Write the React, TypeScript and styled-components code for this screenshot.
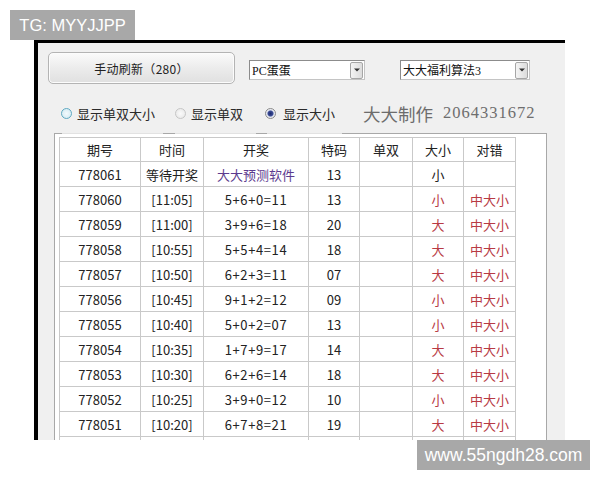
import React from "react";
import styled, { createGlobalStyle } from "styled-components";

const GlobalStyle = createGlobalStyle`
  html, body {
    margin: 0;
    padding: 0;
    background: #ffffff;
  }
  body {
    font-family: "Noto Sans CJK SC", "Noto Sans", sans-serif;
  }
`;

const Page = styled.div`
  position: relative;
  width: 600px;
  height: 480px;
  overflow: hidden;
  padding: 40px 0 0 34px;
  box-sizing: border-box;
`;

const Watermark = styled.div<{ $top: number; $left: number; $w: number; $size: number }>`
  position: absolute;
  top: ${(p) => p.$top}px;
  left: ${(p) => p.$left}px;
  width: ${(p) => p.$w}px;
  height: 30px;
  background: #a8a8a8;
  color: #ffffff;
  font-family: "Liberation Sans", Arial, sans-serif;
  font-size: ${(p) => p.$size}px;
  display: flex;
  align-items: center;
  justify-content: center;
  z-index: 5;
`;

const Window = styled.div`
  width: 531px;
  height: 400px;
  box-sizing: border-box;
  border-top: 3px solid #000;
  border-left: 4px solid #000;
  background: #f0f0f0;
  overflow: hidden;
  padding: 9px 0 0 10px;
`;

const TopRow = styled.div`
  display: flex;
  align-items: flex-start;
`;

const RefreshButton = styled.button`
  width: 187px;
  height: 32px;
  border: 1px solid #b4b4b4;
  border-radius: 5px;
  background: linear-gradient(#fbfbfb, #ececec 50%, #e0e0e0);
  box-shadow: inset 0 0 0 1px #fcfcfc;
  font-family: "Noto Sans CJK SC", sans-serif;
  font-size: 12px;
  color: #222;
  padding: 0;
  letter-spacing: 0.3px;
`;

const Combo = styled.div<{ $ml: number; $w: number }>`
  margin-left: ${(p) => p.$ml}px;
  margin-top: 8px;
  width: ${(p) => p.$w}px;
  height: 20px;
  box-sizing: border-box;
  border: 1px solid #8c8c8c;
  border-right-color: #c4c4c4;
  border-bottom-color: #c4c4c4;
  background: #fff;
  display: flex;
  align-items: center;
  justify-content: space-between;
  padding-left: 2px;
`;

const ComboText = styled.span`
  font-family: "Liberation Serif", "Noto Sans CJK SC", serif;
  font-size: 12px;
  color: #111;
`;

const ComboArrow = styled.span`
  width: 13px;
  height: 17px;
  margin-right: 1px;
  box-sizing: border-box;
  border: 1px solid #a6a6a6;
  border-radius: 2px;
  background: linear-gradient(90deg, #f4f4f4, #dcdcdc);
  display: flex;
  align-items: center;
  justify-content: center;
`;

const RadioRow = styled.div`
  display: flex;
  align-items: center;
  height: 18px;
  margin-top: 20px;
  padding-left: 13px;
`;

const RadioItem = styled.label<{ $ml: number }>`
  display: flex;
  align-items: center;
  margin-left: ${(p) => p.$ml}px;
  font-size: 13px;
  color: #2a2a2a;
`;

const RadioDot = styled.span<{ $kind: "hover" | "off" | "on" }>`
  width: 11px;
  height: 11px;
  box-sizing: border-box;
  border-radius: 50%;
  margin-right: ${(p) => (p.$kind === "on" ? 7 : 5)}px;
  border: 1px solid
    ${(p) => (p.$kind === "hover" ? "#5fa9c2" : p.$kind === "on" ? "#8a8a8a" : "#c6c6c6")};
  background: ${(p) =>
    p.$kind === "on"
      ? "radial-gradient(circle, #1d2b6e 0, #3b4c96 2.5px, #dfe3ef 3.5px, #f4f4f4 5px)"
      : p.$kind === "hover"
      ? "radial-gradient(circle, #f2fafd, #cfe8f1)"
      : "radial-gradient(circle, #fafafa, #e6e6e6)"};
`;

const Maker = styled.span`
  margin-left: 28px;
  font-size: 17.5px;
  color: #6c6c6c;
`;

const Qq = styled.span`
  margin-left: 10px;
  font-family: "Liberation Serif", "DejaVu Serif", serif;
  font-size: 16.5px;
  letter-spacing: 1px;
  color: #6e6e6e;
`;

const Frame = styled.div`
  margin-top: 11px;
  margin-left: 6px;
  width: 493px;
`;

const FrameTop = styled.div`
  display: flex;
  height: 1px;
`;

const FrameSeg = styled.span<{ $w: number; $dark?: boolean }>`
  width: ${(p) => p.$w}px;
  height: 1px;
  background: ${(p) => (p.$dark ? "#a8a8a8" : "#e2e2e2")};
`;

const FrameBody = styled.div`
  height: 320px;
  box-sizing: border-box;
  border-left: 1px solid #a8a8a8;
  border-right: 1px solid #a8a8a8;
  background: #fff;
  padding: 3px 0 0 4px;
`;

const Grid = styled.table`
  border-collapse: collapse;
  table-layout: fixed;
  width: 457px;
  font-size: 13px;
  color: #222;
`;

const HeadCell = styled.th`
  height: 23px;
  padding: 0;
  border: 1px solid #c9c9c9;
  font-weight: normal;
  text-align: center;
`;

const Cell = styled.td<{ $tone?: "red" | "purple" }>`
  height: 24px;
  padding: 0;
  border: 1px solid #c9c9c9;
  text-align: center;
  white-space: nowrap;
  color: ${(p) => (p.$tone === "red" ? "#b83a44" : p.$tone === "purple" ? "#5c3a8e" : "#222")};
`;

const Sum = styled.span`
  letter-spacing: 0.6px;
`;

const columns = [81, 63, 105, 51, 53, 51, 52];
const headers = ["期号", "时间", "开奖", "特码", "单双", "大小", "对错"];

type Row = [string, string, string, string, string, string];

const rows: Row[] = [
  ["778060", "[11:05]", "5+6+0=11", "13", "小", "中大小"],
  ["778059", "[11:00]", "3+9+6=18", "20", "大", "中大小"],
  ["778058", "[10:55]", "5+5+4=14", "18", "大", "中大小"],
  ["778057", "[10:50]", "6+2+3=11", "07", "大", "中大小"],
  ["778056", "[10:45]", "9+1+2=12", "09", "小", "中大小"],
  ["778055", "[10:40]", "5+0+2=07", "13", "小", "中大小"],
  ["778054", "[10:35]", "1+7+9=17", "14", "大", "中大小"],
  ["778053", "[10:30]", "6+2+6=14", "18", "大", "中大小"],
  ["778052", "[10:25]", "3+9+0=12", "10", "小", "中大小"],
  ["778051", "[10:20]", "6+7+8=21", "19", "大", "中大小"],
];

const Arrow = () => (
  <svg width="6" height="4" viewBox="0 0 6 4">
    <path d="M0 0.5h6L3 3.5z" fill="#333" />
  </svg>
);

const App = () => {
  return (
    <>
      <GlobalStyle />
      <Page>
        <Watermark $top={10} $left={10} $w={125} $size={16.5}>
          TG: MYYJJPP
        </Watermark>
        <Watermark $top={440} $left={417} $w={173} $size={17.5}>
          www.55ngdh28.com
        </Watermark>
        <Window>
          <TopRow>
            <RefreshButton>手动刷新（280）</RefreshButton>
            <Combo $ml={14} $w={116}>
              <ComboText>PC蛋蛋</ComboText>
              <ComboArrow>
                <Arrow />
              </ComboArrow>
            </Combo>
            <Combo $ml={35} $w={130}>
              <ComboText>大大福利算法3</ComboText>
              <ComboArrow>
                <Arrow />
              </ComboArrow>
            </Combo>
          </TopRow>
          <RadioRow>
            <RadioItem $ml={0}>
              <RadioDot $kind="hover" />
              显示单双大小
            </RadioItem>
            <RadioItem $ml={20}>
              <RadioDot $kind="off" />
              显示单双
            </RadioItem>
            <RadioItem $ml={22}>
              <RadioDot $kind="on" />
              显示大小
            </RadioItem>
            <Maker>大大制作</Maker>
            <Qq>2064331672</Qq>
          </RadioRow>
          <Frame>
            <FrameTop>
              <FrameSeg $w={8} $dark />
              <FrameSeg $w={101} />
              <FrameSeg $w={12} $dark />
              <FrameSeg $w={81} />
              <FrameSeg $w={11} $dark />
              <FrameSeg $w={75} />
              <FrameSeg $w={205} $dark />
            </FrameTop>
            <FrameBody>
              <Grid>
                <colgroup>
                  {columns.map((w, i) => (
                    <col key={i} style={{ width: w }} />
                  ))}
                </colgroup>
                <thead>
                  <tr>
                    {headers.map((h) => (
                      <HeadCell key={h}>{h}</HeadCell>
                    ))}
                  </tr>
                </thead>
                <tbody>
                  <tr>
                    <Cell>778061</Cell>
                    <Cell>等待开奖</Cell>
                    <Cell $tone="purple">大大预测软件</Cell>
                    <Cell>13</Cell>
                    <Cell />
                    <Cell>小</Cell>
                    <Cell />
                  </tr>
                  {rows.map((r) => (
                    <tr key={r[0]}>
                      <Cell>{r[0]}</Cell>
                      <Cell>{r[1]}</Cell>
                      <Cell>
                        <Sum>{r[2]}</Sum>
                      </Cell>
                      <Cell>{r[3]}</Cell>
                      <Cell />
                      <Cell $tone="red">{r[4]}</Cell>
                      <Cell $tone="red">{r[5]}</Cell>
                    </tr>
                  ))}
                  <tr>
                    {columns.map((_, i) => (
                      <Cell key={i} />
                    ))}
                  </tr>
                </tbody>
              </Grid>
            </FrameBody>
          </Frame>
        </Window>
      </Page>
    </>
  );
};

export default App;
